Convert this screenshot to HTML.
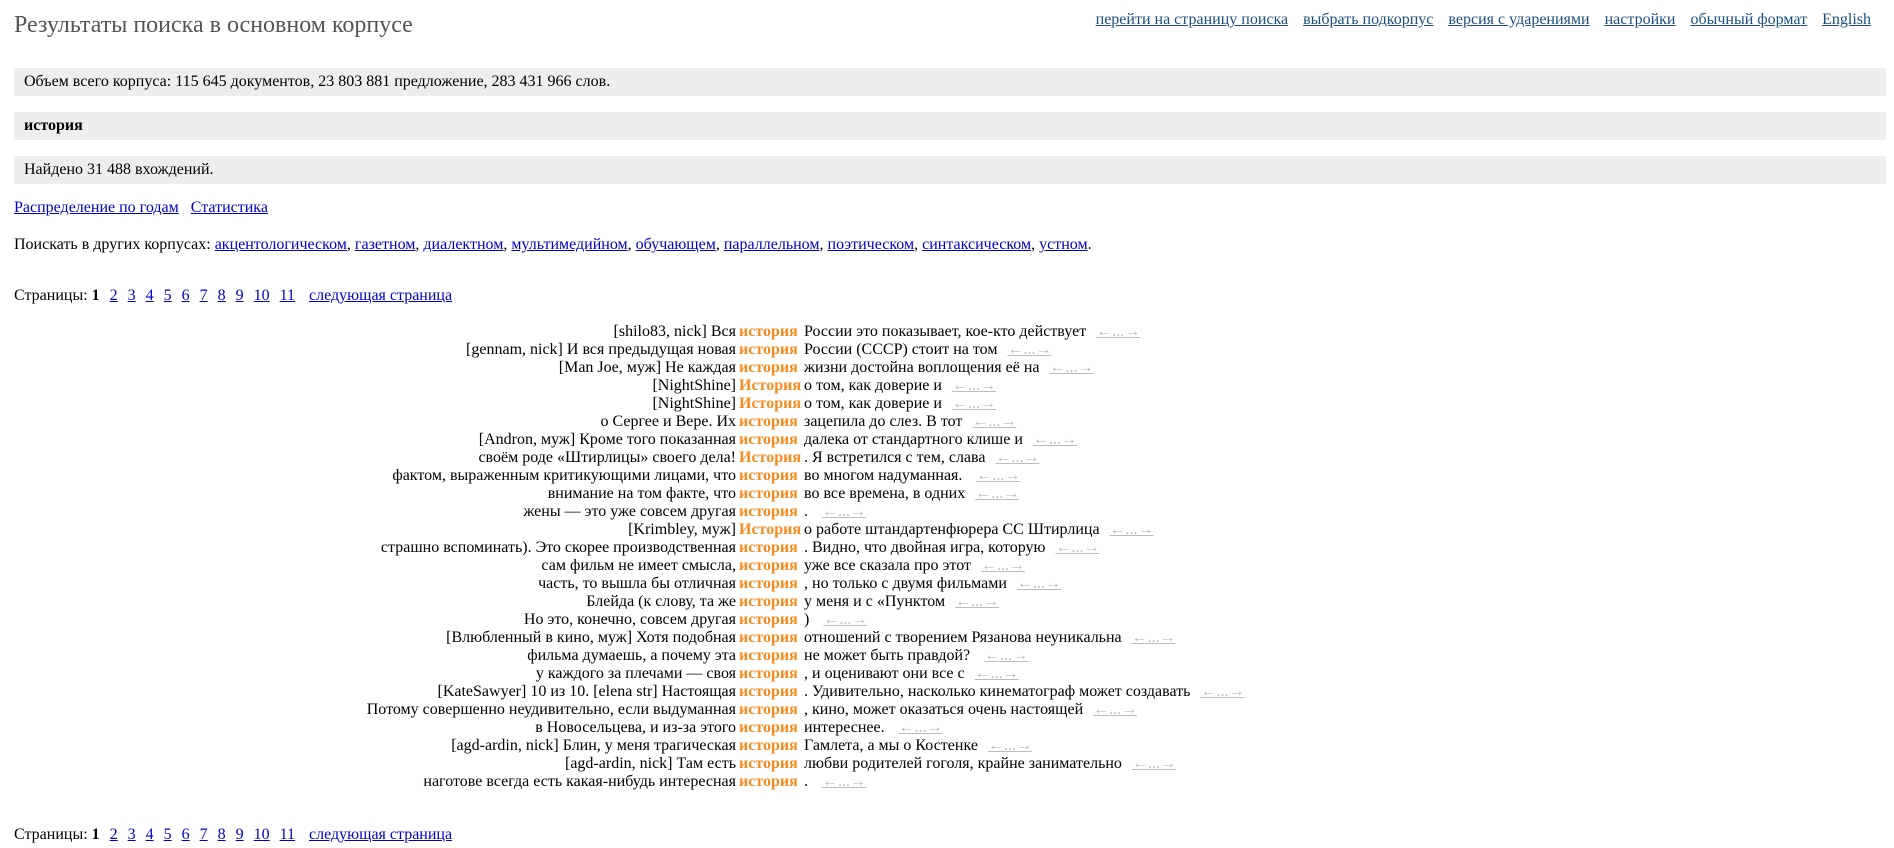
<!DOCTYPE html>
<html><head><meta charset="utf-8"><style>
body{margin:0;background:#fff;font-family:"Liberation Serif","Noto Serif CJK SC",serif;font-size:16px;color:#000;width:1894px;height:848px;overflow:hidden;position:relative}
a{color:#00c;text-decoration:underline}
.title{position:absolute;left:14px;top:12px;font-size:24px;color:#555}
.top{position:absolute;right:23px;top:11px;font-size:16px}
.top a{color:#1b4f7f;margin-left:15px}
.box{position:absolute;left:14px;width:1872px;height:28px;background:#eee;line-height:28px;padding-left:10px;box-sizing:border-box}
.row{position:absolute;left:14px}
.res{position:absolute;left:0;top:323px}
.ln{height:18px;line-height:18px;white-space:nowrap;overflow:visible}
.ln span{display:inline-block;vertical-align:top}
.l{width:736px;text-align:right}
.k{width:68px;font-weight:bold;color:#f98a1c;padding-left:3px;box-sizing:border-box}
.ar{color:#bbb;text-decoration:underline;margin-left:6px}
.pg a{margin-left:6px}
</style></head><body>
<div class="title">Результаты поиска в основном корпусе</div>
<div class="top"><a>перейти на страницу поиска</a><a>выбрать подкорпус</a><a>версия с ударениями</a><a>настройки</a><a>обычный формат</a><a>English</a></div>
<div class="box" style="top:68px">Объем всего корпуса: 115 645 документов, 23 803 881 предложение, 283 431 966 слов.</div>
<div class="box" style="top:112px"><b>история</b></div>
<div class="box" style="top:156px">Найдено 31 488 вхождений.</div>
<div class="row" style="top:199px"><a>Распределение по годам</a>&nbsp;&nbsp; <a>Статистика</a></div>
<div class="row" style="top:236px">Поискать в других корпусах: <a>акцентологическом</a>, <a>газетном</a>, <a>диалектном</a>, <a>мультимедийном</a>, <a>обучающем</a>, <a>параллельном</a>, <a>поэтическом</a>, <a>синтаксическом</a>, <a>устном</a>.</div>
<div class="row pg" style="top:287px">Страницы: <b>1</b> <a>2</a> <a>3</a> <a>4</a> <a>5</a> <a>6</a> <a>7</a> <a>8</a> <a>9</a> <a>10</a> <a>11</a> &nbsp;<a>следующая страница</a></div>
<div class="res">
<div class="ln"><span class="l">[shilo83, nick] Вся</span><span class="k">история</span><span>России это показывает, кое-кто действует <u class="ar">←...→</u></span></div>
<div class="ln"><span class="l">[gennam, nick] И вся предыдущая новая</span><span class="k">история</span><span>России (СССР) стоит на том <u class="ar">←...→</u></span></div>
<div class="ln"><span class="l">[Man Joe, муж] Не каждая</span><span class="k">история</span><span>жизни достойна воплощения её на <u class="ar">←...→</u></span></div>
<div class="ln"><span class="l">[NightShine]</span><span class="k">История</span><span>о том, как доверие и <u class="ar">←...→</u></span></div>
<div class="ln"><span class="l">[NightShine]</span><span class="k">История</span><span>о том, как доверие и <u class="ar">←...→</u></span></div>
<div class="ln"><span class="l">о Сергее и Вере. Их</span><span class="k">история</span><span>зацепила до слез. В тот <u class="ar">←...→</u></span></div>
<div class="ln"><span class="l">[Andron, муж] Кроме того показанная</span><span class="k">история</span><span>далека от стандартного клише и <u class="ar">←...→</u></span></div>
<div class="ln"><span class="l">своём роде «Штирлицы» своего дела!</span><span class="k">История</span><span>. Я встретился с тем, слава <u class="ar">←...→</u></span></div>
<div class="ln"><span class="l">фактом, выраженным критикующими лицами, что</span><span class="k">история</span><span>во многом надуманная. &nbsp;<u class="ar">←...→</u></span></div>
<div class="ln"><span class="l">внимание на том факте, что</span><span class="k">история</span><span>во все времена, в одних <u class="ar">←...→</u></span></div>
<div class="ln"><span class="l">жены — это уже совсем другая</span><span class="k">история</span><span>. &nbsp;<u class="ar">←...→</u></span></div>
<div class="ln"><span class="l">[Krimbley, муж]</span><span class="k">История</span><span>о работе штандартенфюрера СС Штирлица <u class="ar">←...→</u></span></div>
<div class="ln"><span class="l">страшно вспоминать). Это скорее производственная</span><span class="k">история</span><span>. Видно, что двойная игра, которую <u class="ar">←...→</u></span></div>
<div class="ln"><span class="l">сам фильм не имеет смысла,</span><span class="k">история</span><span>уже все сказала про этот <u class="ar">←...→</u></span></div>
<div class="ln"><span class="l">часть, то вышла бы отличная</span><span class="k">история</span><span>, но только с двумя фильмами <u class="ar">←...→</u></span></div>
<div class="ln"><span class="l">Блейда (к слову, та же</span><span class="k">история</span><span>у меня и с «Пунктом <u class="ar">←...→</u></span></div>
<div class="ln"><span class="l">Но это, конечно, совсем другая</span><span class="k">история</span><span>) &nbsp;<u class="ar">←...→</u></span></div>
<div class="ln"><span class="l">[Влюбленный в кино, муж] Хотя подобная</span><span class="k">история</span><span>отношений с творением Рязанова неуникальна <u class="ar">←...→</u></span></div>
<div class="ln"><span class="l">фильма думаешь, а почему эта</span><span class="k">история</span><span>не может быть правдой? &nbsp;<u class="ar">←...→</u></span></div>
<div class="ln"><span class="l">у каждого за плечами — своя</span><span class="k">история</span><span>, и оценивают они все с <u class="ar">←...→</u></span></div>
<div class="ln"><span class="l">[KateSawyer] 10 из 10. [elena str] Настоящая</span><span class="k">история</span><span>. Удивительно, насколько кинематограф может создавать <u class="ar">←...→</u></span></div>
<div class="ln"><span class="l">Потому совершенно неудивительно, если выдуманная</span><span class="k">история</span><span>, кино, может оказаться очень настоящей <u class="ar">←...→</u></span></div>
<div class="ln"><span class="l">в Новосельцева, и из-за этого</span><span class="k">история</span><span>интереснее. &nbsp;<u class="ar">←...→</u></span></div>
<div class="ln"><span class="l">[agd-ardin, nick] Блин, у меня трагическая</span><span class="k">история</span><span>Гамлета, а мы о Костенке <u class="ar">←...→</u></span></div>
<div class="ln"><span class="l">[agd-ardin, nick] Там есть</span><span class="k">история</span><span>любви родителей гоголя, крайне занимательно <u class="ar">←...→</u></span></div>
<div class="ln"><span class="l">наготове всегда есть какая-нибудь интересная</span><span class="k">история</span><span>. &nbsp;<u class="ar">←...→</u></span></div>
</div>
<div class="row pg" style="top:826px">Страницы: <b>1</b> <a>2</a> <a>3</a> <a>4</a> <a>5</a> <a>6</a> <a>7</a> <a>8</a> <a>9</a> <a>10</a> <a>11</a> &nbsp;<a>следующая страница</a></div>
</body></html>
